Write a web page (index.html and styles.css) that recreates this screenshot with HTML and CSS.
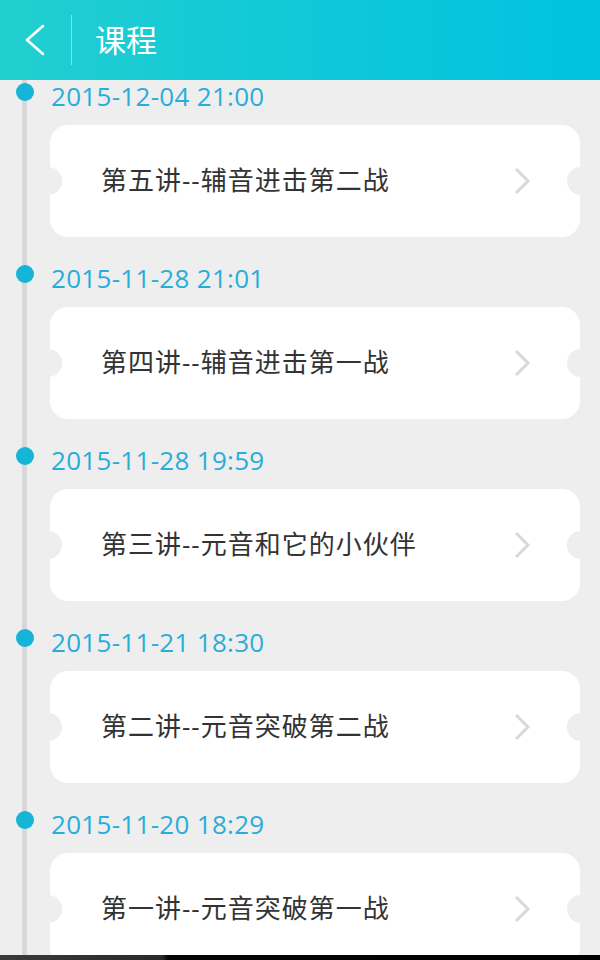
FILE: index.html
```html
<!DOCTYPE html>
<html lang="zh">
<head>
<meta charset="utf-8">
<title>课程</title>
<link rel="stylesheet" href="styles.css">
</head>
<body>
<header class="topbar">
  <div class="back">
    <svg width="26" height="34" viewBox="0 0 26 34"><path d="M21 3 L5 17 L21 31" fill="none" stroke="#fff" stroke-width="2.6" stroke-linecap="round" stroke-linejoin="round"/></svg>
  </div>
  <div class="divider"></div>
  <h1 class="title">课程</h1>
</header>
<main class="timeline">
  <section class="item">
    <div class="date-row"><span class="dot"></span><span class="date">2015-12-04 21:00</span></div>
    <div class="card"><span class="name">第五讲--辅音进击第二战</span><svg class="chev" width="18" height="28" viewBox="0 0 18 28"><path d="M3 2 L15 14 L3 26" fill="none" stroke="#d9d9d9" stroke-width="3"/></svg></div>
  </section>
  <section class="item">
    <div class="date-row"><span class="dot"></span><span class="date">2015-11-28 21:01</span></div>
    <div class="card"><span class="name">第四讲--辅音进击第一战</span><svg class="chev" width="18" height="28" viewBox="0 0 18 28"><path d="M3 2 L15 14 L3 26" fill="none" stroke="#d9d9d9" stroke-width="3"/></svg></div>
  </section>
  <section class="item">
    <div class="date-row"><span class="dot"></span><span class="date">2015-11-28 19:59</span></div>
    <div class="card"><span class="name">第三讲--元音和它的小伙伴</span><svg class="chev" width="18" height="28" viewBox="0 0 18 28"><path d="M3 2 L15 14 L3 26" fill="none" stroke="#d9d9d9" stroke-width="3"/></svg></div>
  </section>
  <section class="item">
    <div class="date-row"><span class="dot"></span><span class="date">2015-11-21 18:30</span></div>
    <div class="card"><span class="name">第二讲--元音突破第二战</span><svg class="chev" width="18" height="28" viewBox="0 0 18 28"><path d="M3 2 L15 14 L3 26" fill="none" stroke="#d9d9d9" stroke-width="3"/></svg></div>
  </section>
  <section class="item">
    <div class="date-row"><span class="dot"></span><span class="date">2015-11-20 18:29</span></div>
    <div class="card"><span class="name">第一讲--元音突破第一战</span><svg class="chev" width="18" height="28" viewBox="0 0 18 28"><path d="M3 2 L15 14 L3 26" fill="none" stroke="#d9d9d9" stroke-width="3"/></svg></div>
  </section>
</main>
<div class="navbar"></div>
</body>
</html>
```
FILE: styles.css
```css
html, body {
  margin: 0;
  padding: 0;
  height: 960px;
  overflow: hidden;
}
body {
  background: #eeeeee;
  font-family: "Open Sans", "Noto Sans CJK SC", sans-serif;
}
.topbar {
  height: 80px;
  display: flex;
  align-items: center;
  background: linear-gradient(90deg, #22cfcf 0%, #10c8d8 50%, #00c3e0 100%);
  box-sizing: border-box;
}
.back {
  width: 26px;
  height: 34px;
  margin-left: 22px;
  display: flex;
}
.divider {
  width: 1px;
  height: 50px;
  margin-left: 23px;
  background: rgba(255, 255, 255, 0.45);
}
.title {
  margin: 0 0 4px 23px;
  font-family: "Noto Sans CJK SC", sans-serif;
  font-weight: 400;
  font-size: 31px;
  color: #ffffff;
  line-height: 1;
}
.timeline {
  background: linear-gradient(90deg, transparent 22px, #d8d8d8 22px, #d8d8d8 27px, transparent 27px);
  min-height: 880px;
}
.item {
  padding-bottom: 25px;
}
.date-row {
  display: flex;
  align-items: flex-start;
  height: 34px;
  margin-bottom: 11px;
}
.dot {
  width: 18px;
  height: 18px;
  border-radius: 50%;
  background: #14b5d6;
  margin-left: 16px;
  margin-top: 3px;
  flex: none;
}
.date {
  margin-left: 17px;
  font-family: "Open Sans", sans-serif;
  font-size: 26px;
  letter-spacing: 0.3px;
  line-height: 32px;
  color: #28addb;
}
.card {
  position: relative;
  margin-left: 50px;
  width: 530px;
  height: 112px;
  border-radius: 18px;
  background: #ffffff;
  display: flex;
  align-items: center;
  justify-content: space-between;
  padding: 0 52px 0 51px;
  box-sizing: border-box;
}
.card::before,
.card::after {
  content: "";
  position: absolute;
  top: 42px;
  width: 28px;
  height: 28px;
  border-radius: 50%;
  background: #eeeeee;
}
.card::before { left: -16px; }
.card::after { right: -15px; }
.name {
  font-family: "Open Sans", "Noto Sans CJK SC", sans-serif;
  font-size: 26px;
  letter-spacing: 1px;
  color: #333333;
  line-height: 1;
  margin-bottom: 2px;
}
.chev {
  flex: none;
  margin-right: -3px;
}
.navbar {
  position: fixed;
  left: 0;
  right: 0;
  bottom: 0;
  height: 5px;
  background: linear-gradient(90deg, #3a3a3a 0%, #2a2a2a 27%, #050505 28%, #000 100%);
}
```
